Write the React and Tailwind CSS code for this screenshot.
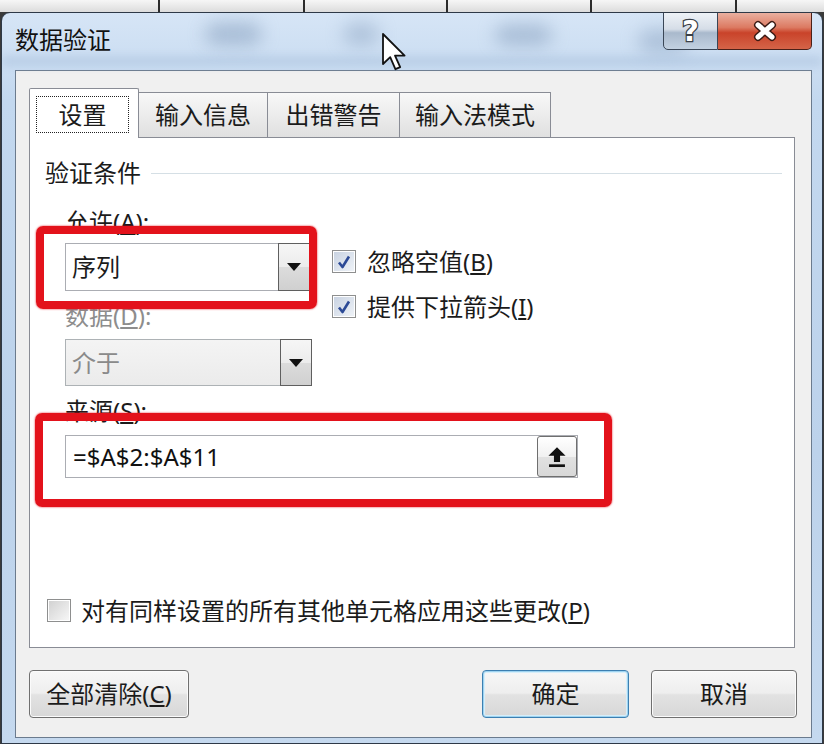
import React from "react";

function Tri() {
  return (
    <svg width="14" height="8" viewBox="0 0 14 8">
      <path d="M0 0h14L7 8z" fill="#111" />
    </svg>
  );
}

function DropBtn() {
  return (
    <div className="w-[32px] h-full border border-[#5f5f5f] bg-[linear-gradient(to_bottom,#f6f6f6,#ececec_50%,#dcdcdc_51%,#d0d0d0)] flex items-center justify-center">
      <Tri />
    </div>
  );
}

function Check({ checked }) {
  return (
    <div className="w-[24px] h-[23px] border border-[#8e8f8f] bg-white p-px shrink-0">
      <div
        className={
          "w-full h-full flex items-center justify-center " +
          (checked
            ? "bg-[linear-gradient(135deg,#c9d3e2,#eef2f7)]"
            : "bg-[linear-gradient(135deg,#d2d2d2,#f6f6f6)]")
        }
      >
        {checked && (
          <svg width="16" height="16" viewBox="0 0 16 16">
            <path
              d="M3 8.5 L6.5 13 L13 2.5"
              fill="none"
              stroke="#2c4a96"
              strokeWidth="2.6"
              strokeLinejoin="round"
            />
          </svg>
        )}
      </div>
    </div>
  );
}

function Btn({ children, w, primary }) {
  return (
    <div
      className={
        "h-[48px] rounded-[4px] border flex items-center justify-center text-[24px] leading-[30px] bg-[linear-gradient(to_bottom,#f7f7f7,#eeeeee_48%,#e2e2e2_52%,#d7d7d7)] " +
        (primary
          ? "border-[#3c7fb1] shadow-[inset_0_0_0_1px_#9ed3f0,inset_0_0_0_2px_#d6eefa]"
          : "border-[#707070] shadow-[inset_0_0_0_1px_#fbfbfb]")
      }
      style={{ width: w }}
    >
      {children}
    </div>
  );
}

export default function App() {
  return (
    <div className="w-[824px] h-[744px] relative overflow-hidden bg-[#3a3a3a] font-['Noto_Sans','Noto_Sans_CJK_SC',sans-serif] text-[#1b1b1b]">
      {/* spreadsheet strip behind */}
      <div className="h-[12px] flex bg-[linear-gradient(to_bottom,#f6f6f6,#dcdcdc)]">
        <div className="w-[160px] border-r-2 border-[#2c2c2c]" />
        <div className="w-[145px] border-r-2 border-[#2c2c2c]" />
        <div className="w-[143px] border-r-2 border-[#2c2c2c]" />
        <div className="w-[144px] border-r-2 border-[#2c2c2c]" />
        <div className="w-[145px] border-r-2 border-[#2c2c2c]" />
        <div className="flex-1" />
      </div>

      {/* window */}
      <div className="relative h-[732px] mx-px rounded-t-[9px] border border-[#2e3947] bg-[linear-gradient(to_bottom,#d6e5f6,#c3d8ef_12%,#bcd2eb_60%,#c5d9ef)] overflow-hidden">
        {/* title bar */}
        <div className="relative h-[57px] pt-[11px] pl-[13px]">
          <div className="absolute left-[203px] top-[10px] w-[57px] h-[22px] rounded-full bg-[#8aa2c0] blur-[9px] opacity-60" />
          <div className="absolute left-[341px] top-[10px] w-[36px] h-[22px] rounded-full bg-[#8aa2c0] blur-[9px] opacity-50" />
          <div className="absolute left-[493px] top-[12px] w-[57px] h-[20px] rounded-full bg-[#8aa2c0] blur-[9px] opacity-60" />
          <div className="absolute left-[636px] top-[16px] w-[50px] h-[24px] rounded-full bg-[#8aa2c0] blur-[9px] opacity-50" />
          <div className="absolute left-0 right-0 top-[44px] h-[8px] bg-[#9fb8d6] blur-[5px] opacity-50" />
          <div className="relative text-[24px] leading-[32px] text-[#111]">数据验证</div>

          {/* caption buttons */}
          <div className="absolute top-[-1px] right-[10px] flex">
            <div className="w-[55px] h-[38px] border border-[#3a4656] rounded-bl-[5px] bg-[linear-gradient(to_bottom,#eef2f7,#d5dde7_45%,#a9b9cc_55%,#c3d1e1)] flex items-center justify-center">
              <span className="text-[29px] leading-[29px] font-bold text-white [-webkit-text-stroke:2.5px_#3a3f47] [paint-order:stroke_fill] font-['DejaVu_Sans',sans-serif]">
                ?
              </span>
            </div>
            <div className="w-[94px] h-[38px] border border-l-0 border-[#4a2018] rounded-br-[5px] bg-[linear-gradient(to_bottom,#eab0a0,#dc7a62_40%,#c9432a_55%,#d56448)] flex items-center justify-center">
              <svg width="26" height="22" viewBox="0 0 26 22">
                <path d="M6 5 L20 17 M20 5 L6 17" stroke="#3b1a14" strokeWidth="8" strokeLinecap="round" />
                <path d="M6 5 L20 17 M20 5 L6 17" stroke="#ffffff" strokeWidth="5" strokeLinecap="round" />
              </svg>
            </div>
          </div>
        </div>

        {/* client area */}
        <div className="ml-[13px] w-[797px] h-[668px] border border-[#6b7b8e] bg-[#f0f0f0] px-[13px]">
          {/* tabs */}
          <div className="pt-[17px] flex items-end relative z-10 -mb-px">
            <div className="w-[110px] h-[50px] border border-b-0 border-[#898c95] rounded-t-[2px] bg-white pt-[7px] pl-[6px]">
              <div className="w-[93px] h-[37px] border border-dotted border-[#222] flex items-center justify-center text-[24px] leading-[30px]">
                设置
              </div>
            </div>
            <div className="w-[129px] h-[46px] border-t border-r border-b border-[#898c95] bg-[linear-gradient(to_bottom,#f8f8f8,#ececec_50%,#e0e0e0)] flex items-center justify-center text-[24px] leading-[30px]">
              输入信息
            </div>
            <div className="w-[132px] h-[46px] border-t border-r border-b border-[#898c95] bg-[linear-gradient(to_bottom,#f8f8f8,#ececec_50%,#e0e0e0)] flex items-center justify-center text-[24px] leading-[30px]">
              出错警告
            </div>
            <div className="w-[151px] h-[46px] border-t border-r border-b border-[#898c95] bg-[linear-gradient(to_bottom,#f8f8f8,#ececec_50%,#e0e0e0)] flex items-center justify-center text-[24px] leading-[30px]">
              输入法模式
            </div>
          </div>

          {/* panel */}
          <div className="w-[766px] h-[511px] border border-[#898c95] bg-white">
            <div className="pt-[19px] pl-[15px] pr-[12px] flex items-center">
              <span className="text-[24px] leading-[32px]">验证条件</span>
              <div className="flex-1 ml-[10px] h-px bg-[#d5dfe5]" />
            </div>

            <div className="mt-[18px] pl-[35px] flex">
              <div className="w-[247px]">
                <div className="h-[30px] text-[24px] leading-[30px]">
                  允许(<u>A</u>):
                </div>
                <div className="mt-[6px] w-[245px] h-[48px] flex">
                  <div className="flex-1 h-full border border-r-0 border-[#abadb3] bg-white flex items-center pl-[6px] text-[24px] leading-[30px]">
                    序列
                  </div>
                  <DropBtn />
                </div>
                <div className="mt-[10px] h-[30px] text-[24px] leading-[30px] text-[#8d8d8d]">
                  数据(<u>D</u>):
                </div>
                <div className="mt-[8px] w-[247px] h-[47px] flex">
                  <div className="flex-1 h-full border border-r-0 border-[#adb2b5] bg-[linear-gradient(to_bottom,#f4f4f4,#ebebeb)] flex items-center pl-[6px] text-[24px] leading-[30px] text-[#8a8a8a]">
                    介于
                  </div>
                  <DropBtn />
                </div>
              </div>

              <div className="ml-[20px] pt-[43px] flex flex-col gap-[22px]">
                <div className="flex items-center gap-[11px] h-[23px]">
                  <Check checked />
                  <span className="text-[24px] leading-[30px]">
                    忽略空值(<u>B</u>)
                  </span>
                </div>
                <div className="flex items-center gap-[11px] h-[23px]">
                  <Check checked />
                  <span className="text-[24px] leading-[30px]">
                    提供下拉箭头(<u>I</u>)
                  </span>
                </div>
              </div>
            </div>

            <div className="mt-[10px] pl-[35px] h-[30px] text-[24px] leading-[30px]">
              来源(<u>S</u>):
            </div>
            <div className="mt-[9px] ml-[35px] w-[513px] h-[43px] border border-[#abadb3] bg-white flex items-center justify-between pl-[7px] pr-0">
              <span className="text-[24px] leading-[30px] text-[#111]">=$A$2:$A$11</span>
              <div className="w-[40px] h-[41px] rounded-[3px] border border-[#6f6f6f] bg-[linear-gradient(to_bottom,#ffffff,#f1f1f1_50%,#e1e1e1_52%,#d8d8d8)] flex items-center justify-center">
                <svg width="20" height="22" viewBox="0 0 16 18">
                  <path d="M8 1 L15 8 L10.5 8 L10.5 13 L5.5 13 L5.5 8 L1 8 Z" fill="#111" />
                  <rect x="1.5" y="15" width="13" height="2.2" fill="#111" />
                </svg>
              </div>
            </div>

            <div className="mt-[120px] pl-[17px] flex items-center gap-[10px] h-[25px]">
              <Check />
              <span className="text-[24px] leading-[30px]">
                对有同样设置的所有其他单元格应用这些更改(<u>P</u>)
              </span>
            </div>
          </div>

          {/* buttons */}
          <div className="mt-[22px] w-[768px] flex justify-between">
            <Btn w={160}>
              全部清除(<u>C</u>)
            </Btn>
            <div className="flex gap-[22px]">
              <Btn w={147} primary>
                确定
              </Btn>
              <Btn w={146}>取消</Btn>
            </div>
          </div>
        </div>
      </div>

      {/* red annotation boxes */}
      <div className="absolute left-[36px] top-[226px] w-[281px] h-[83px] border-[8px] border-[#e3121b] rounded-[7px] shadow-[0_0_2px_#e3121b]" />
      <div className="absolute left-[35px] top-[413px] w-[577px] h-[94px] border-[8px] border-[#e3121b] rounded-[7px] shadow-[0_0_2px_#e3121b]" />

      {/* mouse cursor */}
      <svg className="absolute left-[381px] top-[32px]" width="26" height="40" viewBox="0 0 13 20">
        <path
          d="M1 1 L1 16 L4.6 12.6 L7.2 18.6 L9.6 17.6 L7 11.8 L11.8 11.8 Z"
          fill="#ffffff"
          stroke="#111"
          strokeWidth="0.9"
          strokeLinejoin="round"
        />
      </svg>
    </div>
  );
}
